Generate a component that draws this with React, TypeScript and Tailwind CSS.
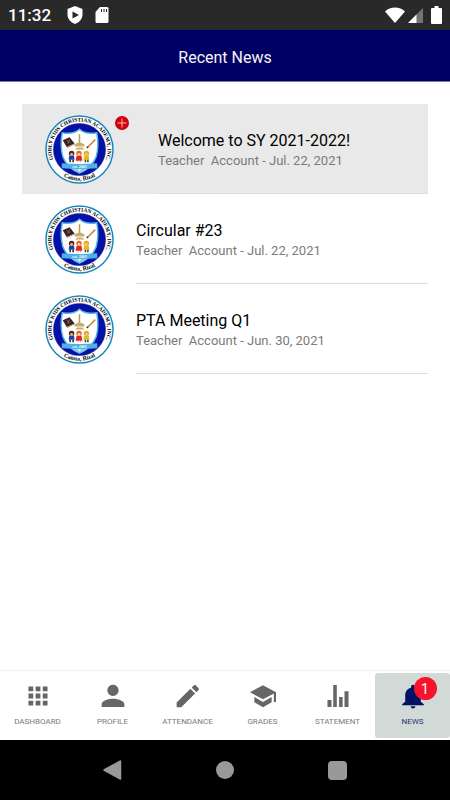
import React, { useId } from "react";

type NewsItem = { title: string; author: string; date: string; unread?: boolean };

const news: NewsItem[] = [
  { title: "Welcome to SY 2021-2022!", author: "Teacher\u00a0 Account", date: "Jul. 22, 2021", unread: true },
  { title: "Circular #23", author: "Teacher\u00a0 Account", date: "Jul. 22, 2021" },
  { title: "PTA Meeting Q1", author: "Teacher\u00a0 Account", date: "Jun. 30, 2021" },
];

function SchoolLogo() {
  const id = useId();
  return (
    <svg viewBox="0 0 140 140" className="size-[69px] shrink-0" role="img" aria-label="School seal">
      <defs>
        <path id={id + "top"} d="M29.700 110.300 A57 57 0 1 1 110.300 110.300" />
        <path id={id + "bottom"} d="M20 109 A63.500 63.500 0 0 0 120 109" />
      </defs>
      <circle cx="70" cy="70" r="68" fill="#fff" stroke="#1687bd" strokeWidth="3" />
      <circle cx="70" cy="70" r="53" fill="#0610a5" stroke="#16308c" strokeWidth="1" />
      <g fontFamily="'Liberation Serif', serif" fontWeight="700" fill="#000">
        <text fontSize="11">
          <textPath href={"#" + id + "top"} startOffset="50%" textAnchor="middle">
            GODLY KIDS CHRISTIAN ACADEMY, INC.
          </textPath>
        </text>
        <text fontSize="12">
          <textPath href={"#" + id + "bottom"} startOffset="50%" textAnchor="middle">
            Cainta, Rizal
          </textPath>
        </text>
      </g>
      <path
        d="M70 29 Q82 40 105 36 Q110 62 104 84 Q96 106 70 118 Q44 106 36 84 Q30 62 35 36 Q58 40 70 29Z"
        fill="#fff"
        stroke="#55b7e8"
        strokeWidth="3"
      />
      <path d="M43 100 L98 100 Q88 111 70 117 Q52 111 43 100Z" fill="#8ccbec" />
      <path d="M70 102 L74 108 L70 115 L66 108Z" fill="#e3f5ff" />
      <path d="M36 51 L50 45 L60 58 L44 65Z" fill="#362025" />
      <path d="M44 65 L60 58 L60 60 L45 67Z" fill="#b88766" />
      <path d="M44 52 L51 56 M50 49 L46 59" stroke="#a77c49" strokeWidth="1.5" />
      <path d="M70 39 L70 58" stroke="#b99a55" strokeWidth="3" />
      <path d="M60 60 Q70 52 80 60 L80 64 L60 64Z M65 66 L76 66 L80 70 L61 70Z" fill="#c9ae6d" />
      <path d="M86 66 L102 50" stroke="#c38b28" strokeWidth="3" />
      <path d="M85 67 L87 64" stroke="#4a3524" strokeWidth="3" />
      <circle cx="54" cy="78" r="5.500" fill="#4a2718" />
      <circle cx="54" cy="80" r="3" fill="#f0b189" />
      <path d="M49 83 L59 83 L60 91 L48 91Z" fill="#1741b2" />
      <path d="M51 91 L51 96 M57 91 L57 96" stroke="#261a22" strokeWidth="3" />
      <circle cx="69" cy="78" r="5.500" fill="#dd6b20" />
      <circle cx="69" cy="80" r="3" fill="#ffd0a0" />
      <path d="M64 83 L74 83 L76 93 L62 93Z" fill="#df2526" />
      <path d="M67 93 L67 96 M72 93 L72 96" stroke="#e39b72" strokeWidth="2" />
      <circle cx="84" cy="78" r="5.500" fill="#e9ac19" />
      <circle cx="84" cy="80" r="3" fill="#f5be8e" />
      <path d="M79 83 L89 83 L90 91 L78 91Z" fill="#e1bd17" />
      <path d="M82 91 L82 96 M87 91 L87 96" stroke="#24472b" strokeWidth="3" />
      <path d="M34 98 Q70 101 106 98 L106 108 Q70 111 34 108Z" fill="#4eb0e5" />
      <text x="70" y="107" fontSize="8" fontFamily="'Liberation Serif', serif" fontWeight="700" fill="#fff" textAnchor="middle">
        est. 2003
      </text>
    </svg>
  );
}

function UnreadMark() {
  return (
    <svg viewBox="0 0 14 14" className="mt-3 mr-[7px] ml-px size-3.5 shrink-0 self-start" aria-label="Unread">
      <circle cx="7" cy="7" r="7" fill="#d0020c" />
      <path d="M7 2.500V11.500M2.500 7H11.500" stroke="#f7b8bb" strokeWidth="1" />
    </svg>
  );
}

const icons: Record<string, React.ReactNode> = {
  DASHBOARD: (
    <path
      d="M4 8h4V4H4v4zm6 12h4v-4h-4v4zm-6 0h4v-4H4v4zm0-6h4v-4H4v4zm6 0h4v-4h-4v4zm6-10v4h4V4h-4zm-6 4h4V4h-4v4zm6 6h4v-4h-4v4zm0 6h4v-4h-4v4z"
      transform="translate(12 12) scale(1.1) translate(-12 -12)"
    />
  ),
  PROFILE: (
    <path d="M12 12c2.900 0 5.200-2.300 5.200-5.200S14.900 1.600 12 1.600 6.800 3.900 6.800 6.800 9.100 12 12 12zm0 2.500c-3.500 0-10.500 1.700-10.500 5V22.200h21v-2.700c0-3.300-7-5-10.500-5z" />
  ),
  ATTENDANCE: (
    <path d="M1.500 18V22.300h4.300L18.500 9.700l-4.300-4.300L1.500 18zM21.800 6.400a1.110 1.110 0 0 0 0-1.600l-2.700-2.700a1.110 1.110 0 0 0-1.600 0l-2.100 2.100 4.300 4.300 2.100-2.100z" />
  ),
  GRADES: <path d="M4 13v4.700L12 22.300l8-4.600V13l-8 4.600L4 13zM12 2 0 8.500 12 15l10-5.400V17.500h2v-9L12 2z" />,
  STATEMENT: <path d="M2.300 15.700H6V22.200H2.300zM7.600 1.800h3.300v20.400H7.600zM13 13h3.300v9.200H13zM18 7.500h3.700v14.700H18z" />,
  NEWS: (
    <path d="M12 23.500c1.200 0 2.200-.9 2.200-2H9.800c0 1.100 1 2 2.200 2zm7.200-6.300v-5.700c0-3.500-1.900-6.400-5.400-7.200V3.500a1.800 1.800 0 0 0-3.600 0v.8c-3.500.8-5.400 3.700-5.400 7.200v5.700L2 19.500v1h20v-1l-2.800-2.300z" />
  ),
};

const tabs = ["DASHBOARD", "PROFILE", "ATTENDANCE", "GRADES", "STATEMENT", "NEWS"];

function StatusBar() {
  return (
    <div className="flex h-[30px] items-center bg-[#292929] px-2 text-white">
      <span className="text-[17px] leading-[30px] font-medium">11:32</span>
      <svg viewBox="0 0 16 18" className="ml-4 h-[18px] w-4" aria-hidden="true">
        <path d="M8 0 15.500 3v5.500c0 4.500-3.200 7.800-7.500 9.500C3.700 16.300.5 13 .5 8.500V3z" fill="#fff" />
        <path d="m5.500 5.500 6.500 3.500-6.500 3.500z" fill="#292929" />
      </svg>
      <svg viewBox="0 0 14 16" className="ml-3 h-4 w-3.5" aria-hidden="true">
        <path d="M5 0h7q1.500 0 1.500 1.500v13q0 1.500-1.500 1.500H2Q.5 16 .5 14.500V5z" fill="#fff" />
        <path d="M6.500 2v3M9 2v3M11.500 2v3" stroke="#292929" strokeWidth="1" />
      </svg>
      <svg viewBox="0 0 20 16" className="ml-auto h-4 w-5" aria-hidden="true">
        <path d="M0 4.500C5-.8 15-.8 20 4.500L10 16z" fill="#fff" />
      </svg>
      <svg viewBox="0 0 15 15" className="ml-[3px] size-[15px]" aria-hidden="true">
        <path d="M15 0v15H0z" fill="#737373" />
        <path d="M8.500 6.500V15H0z" fill="#fff" />
      </svg>
      <svg viewBox="0 0 11 18" className="ml-2 h-[18px] w-[11px]" aria-hidden="true">
        <path d="M3.500 0h4v2H10q1 0 1 1v14q0 1-1 1H1q-1 0-1-1V3q0-1 1-1h2.500z" fill="#fff" />
      </svg>
    </div>
  );
}

export default function App() {
  return (
    <div className="flex min-h-screen flex-col bg-white font-[Roboto,sans-serif]">
      <StatusBar />
      <header className="flex h-[52px] items-center justify-center border-b border-[#77779f] bg-[#000064] pt-1">
        <h1 className="text-base leading-6 text-[#f4f4f4]">Recent News</h1>
      </header>

      <main className="flex-1 px-[22px] pt-[22px]">
        <ul className="flex flex-col">
          {news.map((item) => (
            <li key={item.title} className={item.unread ? "bg-[#e9e9e9]" : "bg-white"}>
              <a href="#news" className="flex h-[90px] items-center pl-[23px]">
                <SchoolLogo />
                {item.unread && <UnreadMark />}
                <div className="ml-[22px] flex flex-1 flex-col justify-center self-stretch border-b border-[#dcdcdc] pt-1">
                  <h2 className="text-base leading-5 text-black">{item.title}</h2>
                  <p className="text-[13px] leading-5 text-[#7b7b7b]">
                    {item.author} - {item.date}
                  </p>
                </div>
              </a>
            </li>
          ))}
        </ul>
      </main>

      <nav className="grid grid-cols-6 border-t border-[#f2f2f2] bg-white py-0.5" aria-label="Main">
        {tabs.map((tab) => {
          const active = tab === "NEWS";
          return (
            <button
              key={tab}
              type="button"
              className={`relative flex h-[65px] flex-col items-center gap-[7px] rounded-[3px] pt-2.5 ${active ? "bg-[#d1dad7] text-[#001463]" : "text-[#666]"}`}
            >
              <svg viewBox="0 0 24 24" className="size-[26px] shrink-0 overflow-visible" fill="currentColor" aria-hidden="true">
                {icons[tab]}
              </svg>
              <span className={`text-[8px] leading-3 ${active ? "text-[#26376f]" : "text-[#7a7a7a]"}`}>{tab}</span>
              {active && (
                <span className="absolute top-1 left-1/2 ml-px flex size-[23px] items-center justify-center rounded-full bg-[#f5142b] text-sm leading-none text-white">
                  1
                </span>
              )}
            </button>
          );
        })}
      </nav>

      <div className="grid h-[60px] grid-cols-3 items-center bg-black px-[12.5%]">
        <button type="button" aria-label="Back" className="justify-self-center">
          <svg viewBox="0 0 20 20" className="size-5" fill="#999" stroke="#999" strokeWidth="1.500" strokeLinejoin="round">
            <path d="M1 10 17.500 1v18z" />
          </svg>
        </button>
        <button type="button" aria-label="Home" className="size-[18px] justify-self-center rounded-full bg-[#999]" />
        <button type="button" aria-label="Recent apps" className="size-[19px] justify-self-center rounded-sm bg-[#999]" />
      </div>
    </div>
  );
}
